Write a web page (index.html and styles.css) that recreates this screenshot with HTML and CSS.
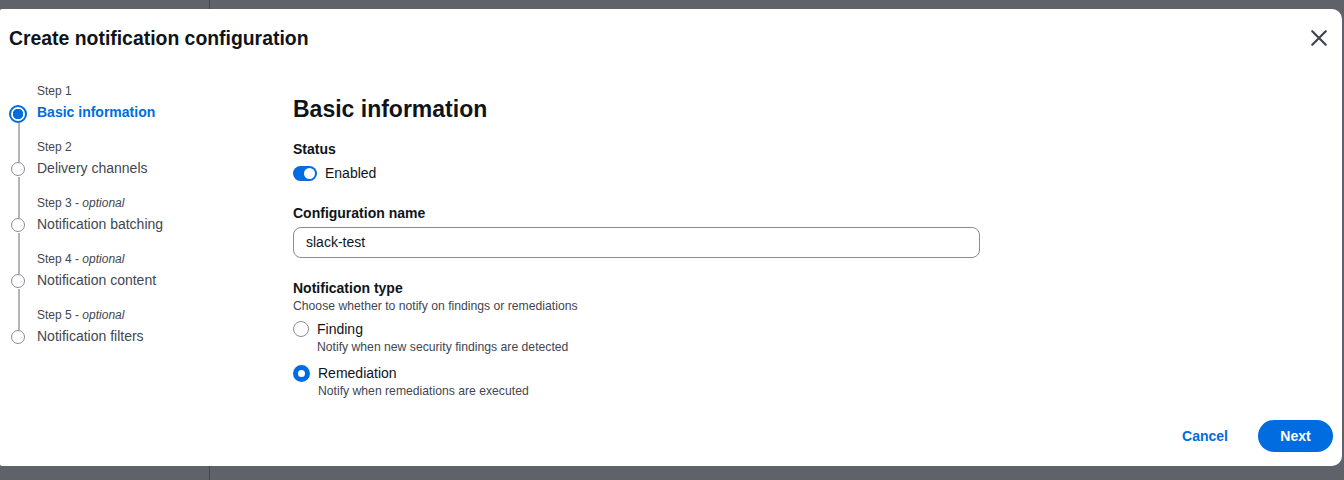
FILE: index.html
```html
<!DOCTYPE html>
<html lang="en">
<head>
  <meta charset="UTF-8" />
  <title>Create notification configuration</title>
  <link rel="stylesheet" href="styles.css">
</head>
<body>

  <!-- Page behind the modal -->
  <div class="backdrop">
    <div class="backdrop-split"></div>
  </div>

  <!-- Modal -->
  <div class="modal">
    <div class="modal-header">
      <h1>Create notification configuration</h1>
      <button class="close-btn" aria-label="Close">
        <svg width="18" height="18" viewBox="0 0 16 16">
          <path d="M2 2 L14 14 M14 2 L2 14" stroke="#424650" stroke-width="2" fill="none" stroke-linecap="round"/>
        </svg>
      </button>
    </div>

    <div class="modal-body">
      <!-- Steps -->
      <ul class="steps">
        <li class="step active">
          <span class="step-num">Step 1</span>
          <span class="step-title">Basic information</span>
        </li>
        <li class="step">
          <span class="step-num">Step 2</span>
          <span class="step-title">Delivery channels</span>
        </li>
        <li class="step">
          <span class="step-num">Step 3 - <i>optional</i></span>
          <span class="step-title">Notification batching</span>
        </li>
        <li class="step">
          <span class="step-num">Step 4 - <i>optional</i></span>
          <span class="step-title">Notification content</span>
        </li>
        <li class="step last">
          <span class="step-num">Step 5 - <i>optional</i></span>
          <span class="step-title">Notification filters</span>
        </li>
      </ul>

      <!-- Form -->
      <div class="form">
        <h2>Basic information</h2>

        <div class="field">
          <div class="field-label">Status</div>
          <label class="toggle-row">
            <span class="toggle"><span class="knob"></span></span>
            Enabled
          </label>
        </div>

        <div class="field">
          <div class="field-label">Configuration name</div>
          <div class="text-input">slack-test</div>
        </div>

        <div class="field">
          <div class="field-label">Notification type</div>
          <div class="field-desc">Choose whether to notify on findings or remediations</div>
          <div class="radio">
            <span class="radio-dot"></span>
            <div>
              <div class="radio-label">Finding</div>
              <div class="radio-desc">Notify when new security findings are detected</div>
            </div>
          </div>
          <div class="radio checked">
            <span class="radio-dot"></span>
            <div>
              <div class="radio-label">Remediation</div>
              <div class="radio-desc">Notify when remediations are executed</div>
            </div>
          </div>
        </div>
      </div>
    </div>

    <div class="modal-footer">
      <button class="link-btn">Cancel</button>
      <button class="primary-btn">Next</button>
    </div>
  </div>

</body>
</html>
```

FILE: styles.css
```css
/* General */
body {
  margin: 0;
  font-family: "Liberation Sans", Arial, sans-serif;
  color: #0f141a;
  background: #5f6369;
  width: 1344px;
  height: 480px;
  overflow: hidden;
  position: relative;
}

.backdrop {
  position: absolute;
  inset: 0;
  background: #5f6369;
}

.backdrop-split {
  position: absolute;
  left: 209px;
  top: 0;
  bottom: 0;
  width: 1px;
  background: #45484d;
}

/* Modal */
.modal {
  position: relative;
  margin-top: 9px;
  width: 1342px;
  height: 457px;
  background: white;
  border-radius: 2px 10px 10px 2px;
  display: flex;
  flex-direction: column;
}

.modal-header {
  display: flex;
  justify-content: space-between;
  align-items: center;
  padding: 17px 14px 0 9px;
}

.modal-header h1 {
  margin: 0;
  font-size: 19.4px;
  font-weight: bold;
  line-height: 24px;
}

.close-btn {
  background: none;
  border: none;
  padding: 0;
  width: 18px;
  height: 18px;
  cursor: pointer;
}

.modal-body {
  display: flex;
  padding-top: 33px;
  flex: 1;
}

/* Steps */
.steps {
  list-style: none;
  margin: 0;
  padding: 0 0 0 37px;
  width: 256px;
}

.step {
  position: relative;
  height: 56px;
}

.step-num {
  display: block;
  font-size: 12px;
  line-height: 16px;
  color: #424650;
}

.step-title {
  display: block;
  font-size: 14px;
  line-height: 20px;
  margin-top: 3px;
  color: #424650;
}

.step::before {
  content: "";
  position: absolute;
  left: -26px;
  top: 23px;
  width: 12px;
  height: 12px;
  border: 1.5px solid #8c8c94;
  border-radius: 50%;
  background: white;
}

.step::after {
  content: "";
  position: absolute;
  left: -19px;
  top: 38px;
  width: 1.5px;
  height: 41px;
  background: #b4b4bb;
}

.step.last::after {
  display: none;
}

.step.active .step-title {
  color: #006ce0;
  font-weight: bold;
}

.step.active::before {
  left: -28px;
  top: 22px;
  width: 14px;
  height: 14px;
  border: 2px solid #006ce0;
  background: radial-gradient(circle, #006ce0 0 5px, white 5.5px);
}

.step.active::after {
  top: 40px;
  height: 39px;
}

/* Form */
.form {
  flex: 1;
  padding-top: 11px;
}

.form h2 {
  margin: 0 0 16px;
  font-size: 23px;
  line-height: 30px;
  font-weight: bold;
}

.field {
  margin-bottom: 21px;
}

.field-label {
  font-size: 14px;
  font-weight: bold;
  line-height: 18px;
  margin-bottom: 5px;
}

.field-desc {
  font-size: 12.2px;
  line-height: 16px;
  color: #424650;
  margin-top: -4px;
  margin-bottom: 5px;
}

.toggle-row {
  display: flex;
  align-items: center;
  gap: 8px;
  font-size: 14px;
  line-height: 20px;
}

.toggle {
  width: 24px;
  height: 15px;
  border-radius: 8px;
  background: #006ce0;
  position: relative;
}

.knob {
  position: absolute;
  right: 2px;
  top: 2px;
  width: 11px;
  height: 11px;
  border-radius: 50%;
  background: white;
}

.text-input {
  width: 687px;
  height: 31px;
  box-sizing: border-box;
  border: 1px solid #8c8c94;
  border-radius: 8px;
  padding: 0 12px;
  font-size: 14px;
  line-height: 29px;
  margin-bottom: 2px;
}

.radio {
  display: flex;
  gap: 8px;
  margin-bottom: 8px;
}

.radio-dot {
  width: 14px;
  height: 14px;
  border: 1.5px solid #8c8c94;
  border-radius: 50%;
  margin-top: 2px;
  flex-shrink: 0;
}

.radio.checked .radio-dot {
  border: 5px solid #006ce0;
  width: 7px;
  height: 7px;
}

.radio-label {
  font-size: 14px;
  line-height: 20px;
}

.radio-desc {
  font-size: 12.2px;
  line-height: 16px;
  color: #424650;
}

/* Footer */
.modal-footer {
  display: flex;
  justify-content: flex-end;
  align-items: center;
  gap: 30px;
  padding: 0 9px 15px 0;
}

.link-btn {
  background: none;
  border: none;
  padding: 0;
  font-family: inherit;
  font-size: 14px;
  font-weight: bold;
  color: #006ce0;
  cursor: pointer;
}

.primary-btn {
  background: #006ce0;
  color: white;
  border: none;
  border-radius: 16px;
  width: 75px;
  height: 32px;
  font-family: inherit;
  font-size: 14px;
  font-weight: bold;
  cursor: pointer;
}
```
